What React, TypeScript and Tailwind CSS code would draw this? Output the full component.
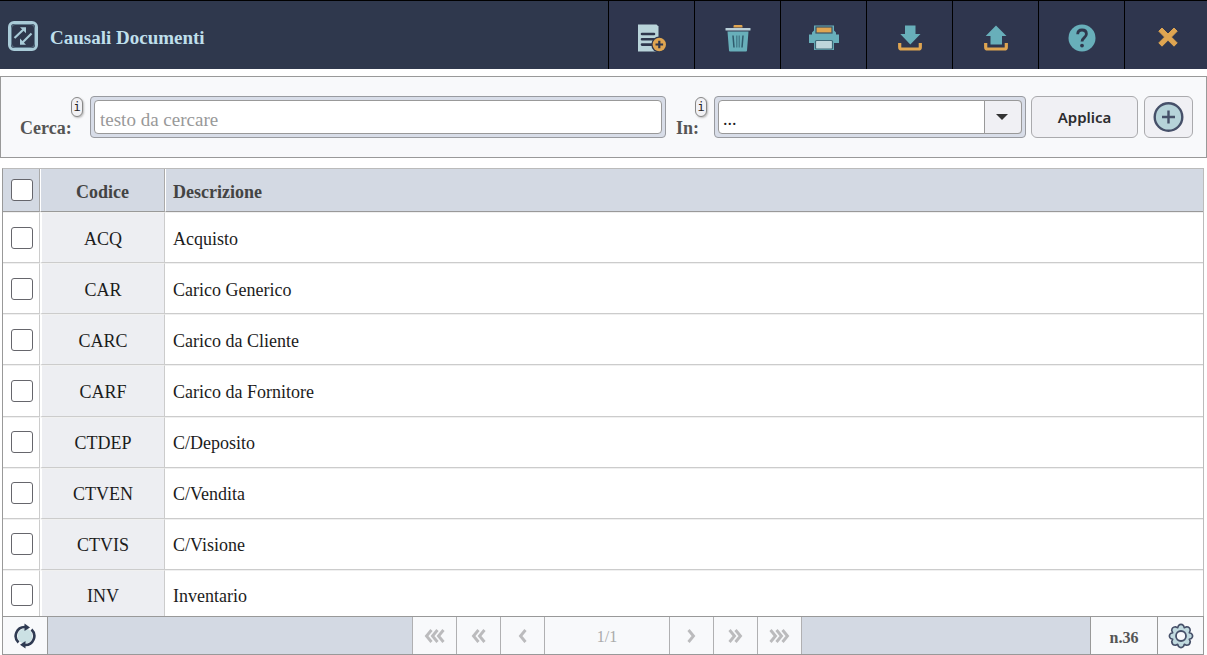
import type { ReactNode } from "react";

const rows = [
  { code: "ACQ", description: "Acquisto" },
  { code: "CAR", description: "Carico Generico" },
  { code: "CARC", description: "Carico da Cliente" },
  { code: "CARF", description: "Carico da Fornitore" },
  { code: "CTDEP", description: "C/Deposito" },
  { code: "CTVEN", description: "C/Vendita" },
  { code: "CTVIS", description: "C/Visione" },
  { code: "INV", description: "Inventario" },
];

function LogoIcon() {
  return (
    <svg width="30" height="30" viewBox="0 0 30 30" fill="none" aria-hidden="true">
      <rect x="1.500" y="1.500" width="27" height="27" rx="4.500" stroke="#a9cbd8" strokeWidth="3" />
      <rect x="3.500" y="3.500" width="23" height="23" rx="3.500" stroke="#5f7a8c" strokeWidth="1" />
      <g stroke="#a9cbd8" strokeWidth="2.200">
        <path d="M6.500 17 L16 8" />
        <path d="M23.500 12.500 L14 22" />
      </g>
      <path d="M12 6.200h6v6z" fill="#a9cbd8" />
      <path d="M12 17.500v6.300h6z" fill="#a9cbd8" />
    </svg>
  );
}

function NewIcon() {
  return (
    <svg width="28" height="28" viewBox="0 0 28 28" aria-hidden="true">
      <path d="M0 0.500h18.500l2 2V27.500H0z" fill="#b9d4da" />
      <g stroke="#2f374d" strokeWidth="2.600" strokeLinecap="round">
        <path d="M4 10h12M4 15.300h12M4 20.600h11" />
      </g>
      <circle cx="21.300" cy="20.500" r="8" fill="#2f374d" />
      <circle cx="21.300" cy="20.500" r="6.700" fill="#dfa551" />
      <path d="M21.300 16.700v7.600M17.500 20.500h7.600" stroke="#2f374d" strokeWidth="2.200" />
    </svg>
  );
}

function TrashIcon() {
  return (
    <svg width="26" height="28" viewBox="0 0 26 28" aria-hidden="true">
      <path d="M8.500 3.500V2q0-1 1-1h7q1 0 1 1v1.500z" fill="#dfa551" />
      <rect x="0.500" y="4" width="25" height="2.600" rx="0.500" fill="#b9cfd8" />
      <path d="M2.500 7.500h21l-1.500 19q0 1-1 1H5q-1 0-1-1z" fill="#68afba" />
      <path d="M8 11.500l1 12M18 11.500l-1 12" stroke="#2f5a6c" strokeWidth="1.500" />
      <path d="M11.800 11.500v12M14.200 11.500v12" stroke="#3f7483" strokeWidth="1.200" />
    </svg>
  );
}

function PrintIcon() {
  return (
    <svg width="30" height="28" viewBox="0 0 30 28" aria-hidden="true">
      <path d="M5 1.500h20v5l2 2v2h3v8.500h-5v7H5v-7H0v-8.500h3v-2l2-2z" fill="#68afba" />
      <rect x="7" y="3" width="16" height="6" fill="#dfa551" stroke="#3d5362" strokeWidth="1.200" />
      <rect x="6.500" y="16.500" width="17" height="8.500" rx="1" fill="#bdd5db" stroke="#3d6878" strokeWidth="1.200" />
    </svg>
  );
}

function Tray() {
  return (
    <path
      d="M1.700 18v4.200q0 1.800 1.800 1.800h17q1.800 0 1.800-1.800V18"
      fill="none"
      stroke="#dfa551"
      strokeWidth="3.200"
    />
  );
}

function DownloadIcon() {
  return (
    <svg width="24" height="26" viewBox="0 0 24 26" aria-hidden="true">
      <path d="M7 0.500h10.500v8.500h5L12.300 19.500 2.300 9H7z" fill="#68afba" />
      <Tray />
    </svg>
  );
}

function UploadIcon() {
  return (
    <svg width="24" height="26" viewBox="0 0 24 26" aria-hidden="true">
      <path d="M12 0.500L22.500 11H18v8.500H6.500V11H1.700z" fill="#68afba" />
      <Tray />
    </svg>
  );
}

function HelpIcon() {
  return (
    <svg width="28" height="28" viewBox="0 0 28 28" aria-hidden="true">
      <circle cx="14" cy="14" r="13.500" fill="#68afba" />
      <path
        d="M9.700 10.200C9.700 7.300 11.500 6 14 6s4.400 1.500 4.400 4c0 3.600-4.400 3.600-4.400 7.500"
        fill="none"
        stroke="#2f374d"
        strokeWidth="2.800"
      />
      <circle cx="14" cy="21.600" r="1.900" fill="#2f374d" />
    </svg>
  );
}

function CloseIcon() {
  return (
    <svg width="20" height="22" viewBox="0 0 20 22" aria-hidden="true">
      <path
        d="M4 1l6 6 6-6 3.200 3.200-5.800 5.900 5.800 5.800L16 19.200l-6-6-6 6L0.800 15.900l5.800-5.800L0.800 4.200z"
        fill="#dfa551"
        stroke="#dfa551"
        strokeLinejoin="round"
      />
    </svg>
  );
}

function AddIcon() {
  return (
    <svg width="32" height="32" viewBox="0 0 32 32" aria-hidden="true">
      <circle cx="15.500" cy="16" r="13.800" fill="#b6d3d9" stroke="#465069" strokeWidth="2.400" />
      <path d="M15.500 9.500v13M9 16h13" stroke="#465069" strokeWidth="2.400" />
    </svg>
  );
}

function RefreshIcon() {
  return (
    <svg width="22" height="26" viewBox="0 0 22 26" aria-hidden="true">
      <circle cx="11" cy="13" r="7.500" fill="#cbe1e4" />
      <g fill="none" stroke="#2f3a52" strokeWidth="2.600">
        <path d="M4.500 19.500A9 9 0 0 1 11 4" />
        <path d="M17.500 6.500A9 9 0 0 1 11 22" />
      </g>
      <path d="M10.500 0.500l5.500 4-5.500 3.500zM11.500 18l-5.500 3.800 5.500 3.700z" fill="#2f3a52" />
    </svg>
  );
}

function GearIcon() {
  return (
    <svg width="26" height="26" viewBox="0 0 26 26" aria-hidden="true">
      <path
        d="M10.500 2.600Q13 0.200 15.500 2.600L16.300 4.700L18.600 3.700Q22 3.900 22.200 7.300L21.300 9.700L23.400 10.500Q25.800 13 23.400 15.500L21.300 16.300L22.300 18.600Q22 22 18.600 22.300L16.300 21.300L15.500 23.400Q13 25.800 10.500 23.400L9.700 21.300L7.400 22.300Q4 22 3.700 18.600L4.700 16.300L2.600 15.500Q0.200 13 2.600 10.500L4.700 9.700L3.700 7.400Q4 4 7.400 3.700L9.700 4.700Z"
        fill="#c1dadf"
        stroke="#465069"
        strokeWidth="1.600"
        strokeLinejoin="round"
      />
      <circle cx="13" cy="13" r="5" fill="#f8f9fb" stroke="#465069" strokeWidth="1.800" />
    </svg>
  );
}

function Chevrons({ count, right = false }: { count: number; right?: boolean }) {
  const width = 9 + (count - 1) * 6;
  return (
    <svg width={width} height="14" viewBox={`0 0 ${width} 14`} aria-hidden="true">
      {Array.from({ length: count }, (_, i) => (
        <path
          key={i}
          d={right ? `M${1.5 + i * 6} 1l5 6-5 6` : `M${7.5 + i * 6} 1l-5 6 5 6`}
          fill="none"
          stroke="#bbbbbd"
          strokeWidth="2.900"
        />
      ))}
    </svg>
  );
}

const tools: { label: string; icon: ReactNode }[] = [
  { label: "Nuovo", icon: <NewIcon /> },
  { label: "Elimina", icon: <TrashIcon /> },
  { label: "Stampa", icon: <PrintIcon /> },
  { label: "Importa", icon: <DownloadIcon /> },
  { label: "Esporta", icon: <UploadIcon /> },
  { label: "Aiuto", icon: <HelpIcon /> },
  { label: "Chiudi", icon: <CloseIcon /> },
];

function InfoBadge() {
  return (
    <span className="absolute top-px right-px flex h-5 w-3 items-center justify-center rounded-md border border-[#888] bg-[#f1f1f4] font-['DejaVu_Sans_Mono',monospace] text-xs font-normal text-[#222] shadow-[1px_1px_2px_#bbb]">
      i
    </span>
  );
}

function Check({ label }: { label: string }) {
  return (
    <input
      type="checkbox"
      aria-label={label}
      className="mx-auto block size-[22px] appearance-none rounded-[3px] border border-[#66666c] bg-white checked:bg-[#465069]"
    />
  );
}

function PageButton({ label, children }: { label: string; children: ReactNode }) {
  return (
    <button
      type="button"
      aria-label={label}
      className="flex w-11 items-center justify-center border-r border-[#b0b0b2]"
    >
      {children}
    </button>
  );
}

export default function App() {
  return (
    <div className="flex h-screen flex-col overflow-hidden bg-white font-['Liberation_Serif',serif] text-lg text-[#1c1c1c]">
      <header className="flex h-[69px] shrink-0 overflow-hidden border-t border-black bg-[#2f384d]">
        <div className="flex min-w-0 flex-1 items-center gap-3 pl-2 text-[#bfdfeb]">
          <span className="pt-0.5">
            <LogoIcon />
          </span>
          <h1 className="truncate pt-1.5 text-[19px] font-bold">Causali Documenti</h1>
        </div>
        <nav className="-mr-[3px] flex" aria-label="Azioni">
          {tools.map((tool) => (
            <button
              key={tool.label}
              type="button"
              aria-label={tool.label}
              className="flex w-[86px] items-center justify-center border-l border-black bg-[#2f364e] pt-1.5"
            >
              {tool.icon}
            </button>
          ))}
        </nav>
      </header>

      <form
        className="mt-[7px] flex h-[82px] shrink-0 items-center border border-[#999] bg-[#f8f9fb] pr-[13px] pl-[19px]"
        onSubmit={(e) => e.preventDefault()}
      >
        <label htmlFor="search" className="relative flex h-[42px] w-16 items-end pt-5 leading-5 font-bold text-[#555]">
          Cerca:
          <InfoBadge />
        </label>
        <div className="ml-1.5 h-[42px] min-w-0 flex-1 rounded border border-[#999ba0] bg-[#d8dde8] p-[3px]">
          <input
            id="search"
            type="text"
            placeholder="testo da cercare"
            className="h-[34px] w-full rounded border border-[#999] bg-white px-[5px] pt-1.5 text-[19px] placeholder:text-[#999]"
          />
        </div>
        <label htmlFor="field" className="relative ml-2.5 flex h-[42px] w-8 items-end pt-5 leading-5 font-bold text-[#555]">
          In:
          <InfoBadge />
        </label>
        <div className="ml-1.5 h-[42px] w-[312px] rounded border border-[#999ba0] bg-[#d8dde8] p-[3px]">
          <div className="relative">
            <select
              id="field"
              className="h-[34px] w-full appearance-none rounded border border-[#999] bg-white pt-1 pr-10 pl-1"
            >
              <option>...</option>
              <option>Codice</option>
              <option>Descrizione</option>
            </select>
            <span className="pointer-events-none absolute inset-y-0 right-0 flex w-[38px] items-center justify-center rounded-r border border-[#999] bg-[#f0f0f4] pr-0.5">
              <svg width="12" height="6" viewBox="0 0 12 6" aria-hidden="true">
                <path d="M0 0h12L6 6z" fill="#333" />
              </svg>
            </span>
          </div>
        </div>
        <button
          type="submit"
          className="ml-[5px] h-[42px] w-[107px] rounded-md border border-[#aaaaad] bg-[#f0f0f4] pt-0.5 font-['Noto_Sans',sans-serif] text-[15px] font-semibold text-[#2c2c2e]"
        >
          Applica
        </button>
        <button
          type="button"
          aria-label="Aggiungi filtro"
          className="ml-1.5 flex h-[42px] w-[49px] items-center justify-center rounded-md border border-[#aaaaad] bg-[#f0f0f4]"
        >
          <AddIcon />
        </button>
      </form>

      <main className="mt-2.5 mr-[3px] ml-0.5 min-h-0 flex-1 overflow-hidden border-t border-r border-l border-t-[#bbb] border-r-[#bbb] border-l-[#999]">
        <table className="h-[452px] w-full table-fixed border-separate border-spacing-0">
          <colgroup>
            <col className="w-[37px]" />
            <col className="w-[125px]" />
            <col />
          </colgroup>
          <thead>
            <tr className="h-[43px] bg-[#d3d9e3] text-[#444]">
              <th className="border-r border-b border-r-[#aaa] border-b-[#999] p-0 pl-0.5">
                <Check label="Seleziona tutto" />
              </th>
              <th className="border-r border-b border-l border-r-[#aaa] border-b-[#999] border-l-white p-0 pt-1">Codice</th>
              <th className="border-b border-l border-b-[#999] border-l-white p-0 pt-1 pl-[7px] text-left">Descrizione</th>
            </tr>
          </thead>
          <tbody>
            {rows.map((row) => (
              <tr key={row.code}>
                <td className="border-t border-r border-b border-t-[#f0f0f0] border-r-[#ccc] border-b-[#ccc] p-0 pl-0.5">
                  <Check label={`Seleziona ${row.code}`} />
                </td>
                <td className="border-t border-r border-b border-l-2 border-t-[#f0f0f0] border-r-[#ccc] border-b-[#ccc] border-l-white bg-[#edeef2] p-0 pt-0.5 text-center">
                  {row.code}
                </td>
                <td className="border-t border-b border-t-[#f0f0f0] border-b-[#ccc] p-0 pt-0.5 pl-2">{row.description}</td>
              </tr>
            ))}
          </tbody>
        </table>
      </main>

      <footer className="mr-[3px] ml-0.5 grid h-[39px] shrink-0 grid-cols-[1fr_auto_1fr] border border-[#999] bg-[#d3d9e3]">
        <div className="flex">
          <button
            type="button"
            aria-label="Aggiorna"
            className="flex w-[45px] items-center justify-center border-r border-[#999] bg-[#f8f9fb]"
          >
            <RefreshIcon />
          </button>
        </div>
        <div className="ml-2 flex border-l border-[#b0b0b2] bg-[#f8f9fb]">
          <PageButton label="Prima pagina">
            <Chevrons count={3} />
          </PageButton>
          <PageButton label="Indietro veloce">
            <Chevrons count={2} />
          </PageButton>
          <PageButton label="Pagina precedente">
            <Chevrons count={1} />
          </PageButton>
          <span className="flex w-[125px] items-center justify-center border-r border-[#b0b0b2] pt-0.5 text-base text-[#aaa]">
            1/1
          </span>
          <PageButton label="Pagina successiva">
            <Chevrons count={1} right />
          </PageButton>
          <PageButton label="Avanti veloce">
            <Chevrons count={2} right />
          </PageButton>
          <PageButton label="Ultima pagina">
            <Chevrons count={3} right />
          </PageButton>
        </div>
        <div className="flex justify-end">
          <span className="flex w-[67px] items-center justify-center border-l border-[#999] bg-[#f8f9fb] pt-1 text-base font-bold text-[#555]">
            n.36
          </span>
          <button
            type="button"
            aria-label="Impostazioni"
            className="flex w-[46px] items-center justify-center border-l border-[#999] bg-[#f8f9fb]"
          >
            <GearIcon />
          </button>
        </div>
      </footer>
    </div>
  );
}
